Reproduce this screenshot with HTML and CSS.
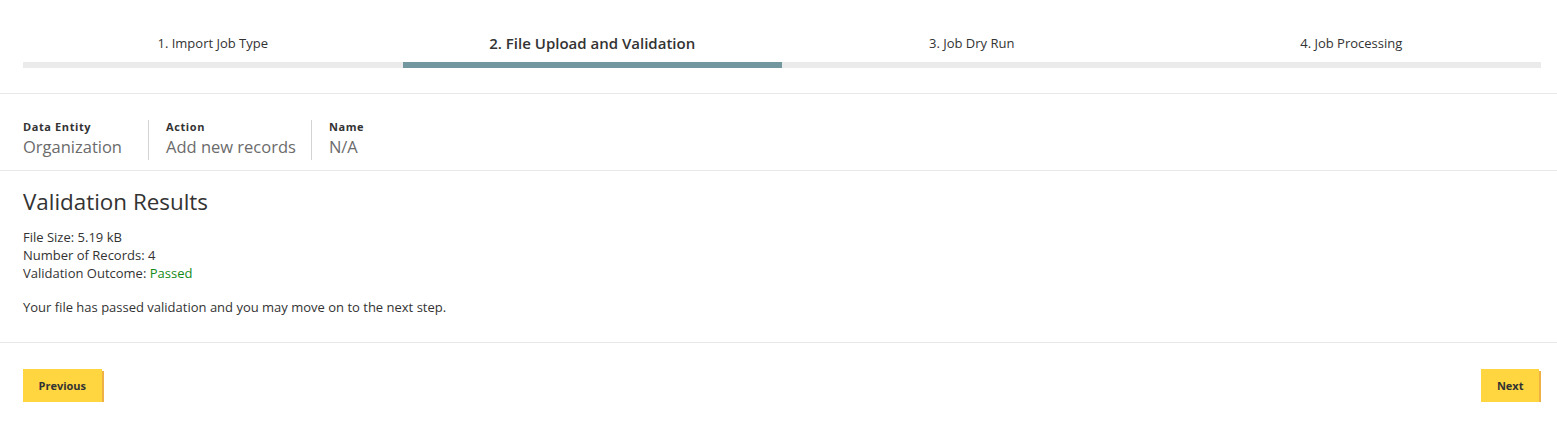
FILE: index.html
```html
<!DOCTYPE html>
<html>
<head>
<meta charset="utf-8">
<link rel="stylesheet" href="styles.css">
</head>
<body>
<div class="steps">
  <div class="step"><div class="step-label">1. Import Job Type</div><div class="step-bar"></div></div>
  <div class="step active"><div class="step-label">2. File Upload and Validation</div><div class="step-bar"></div></div>
  <div class="step"><div class="step-label">3. Job Dry Run</div><div class="step-bar"></div></div>
  <div class="step"><div class="step-label">4. Job Processing</div><div class="step-bar"></div></div>
</div>
<div class="details">
  <div class="detail first">
    <div class="detail-label">Data Entity</div>
    <div class="detail-value">Organization</div>
  </div>
  <div class="detail">
    <div class="detail-label">Action</div>
    <div class="detail-value">Add new records</div>
  </div>
  <div class="detail">
    <div class="detail-label">Name</div>
    <div class="detail-value">N/A</div>
  </div>
</div>
<div class="results">
  <h2 class="results-title">Validation Results</h2>
  <div class="results-line">File Size: 5.19 kB</div>
  <div class="results-line">Number of Records: 4</div>
  <div class="results-line">Validation Outcome: <span class="passed">Passed</span></div>
  <p class="results-msg">Your file has passed validation and you may move on to the next step.</p>
</div>
<div class="actions">
  <button class="btn">Previous</button>
  <button class="btn">Next</button>
</div>
</body>
</html>
```
FILE: styles.css
```css
* { box-sizing: border-box; }
body {
  margin: 0;
  font-family: "Open Sans", Lato, Arial, sans-serif;
  color: #333;
  background: #fff;
}
.steps {
  display: grid;
  grid-template-columns: repeat(4, 1fr);
  padding: 34px 16px 25px 23px;
  border-bottom: 1px solid #e8e8e8;
}
.step { display: flex; flex-direction: column; align-items: center; }
.step-label {
  font-size: 13px;
  line-height: 18px;
  height: 18px;
  color: #333;
  margin-bottom: 10px;
}
.step.active .step-label {
  font-size: 15px;
  font-weight: 600;
  color: #333;
}
.step-bar { width: 100%; height: 6px; background: #ebebeb; }
.step.active .step-bar { background: #72979e; }

.details {
  display: flex;
  padding: 26px 16px 10px 23px;
  border-bottom: 1px solid #e8e8e8;
}
.detail {
  padding: 0 15px 0 17px;
  border-left: 1px solid #d4d4d4;
}
.detail.first { padding-left: 0; padding-right: 26px; border-left: none; }
.detail-label {
  font-size: 11px;
  font-weight: 700;
  letter-spacing: 0.6px;
  line-height: 14px;
  color: #333;
  margin-top: -7px;
  padding-top: 7px;
}
.detail-value {
  font-size: 16.5px;
  line-height: 26px;
  color: #6b6b6b;
}

.results {
  padding: 17px 16px 26px 23px;
  border-bottom: 1px solid #e8e8e8;
}
.results-title {
  margin: 0 0 12px;
  font-size: 22.4px;
  font-weight: 400;
  line-height: 28px;
  color: #333;
}
.results-line { font-size: 13px; line-height: 18px; color: #333; }
.passed { color: #138a17; }
.results-msg { margin: 16px 0 0; font-size: 13px; line-height: 18px; color: #333; }

.actions {
  display: flex;
  justify-content: space-between;
  padding: 26px 18px 0 23px;
}
.btn {
  font-family: inherit;
  font-size: 11px;
  font-weight: 700;
  color: #333;
  background: #ffd640;
  border: none;
  border-radius: 0;
  height: 33px;
  padding: 0 15.5px;
  box-shadow: 2px 2px 0 #efb144;
  cursor: pointer;
}
```
